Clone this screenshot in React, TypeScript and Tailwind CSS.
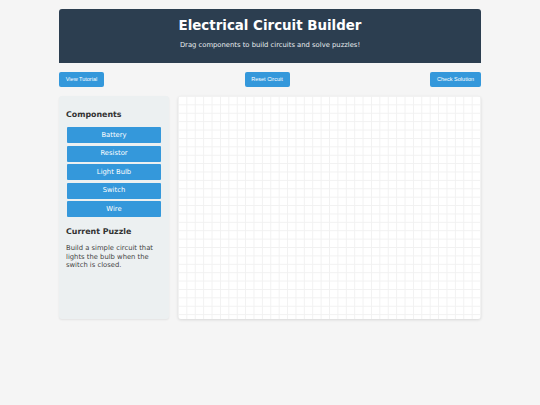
export default function App() {
  const comps = ["Battery", "Resistor", "Light Bulb", "Switch", "Wire"];
  return (
    <div className="min-h-[405px] w-[540px] bg-[#f5f5f5] pt-[9px]" style={{ fontFamily: '"DejaVu Sans", sans-serif' }}>
      <div className="mx-auto w-[422px]">
        <div className="flex h-[54px] flex-col items-center rounded-t-[3px] bg-[#2c3e50] pt-[8px] text-white">
          <div className="text-[13.4px] font-bold leading-[18px]">Electrical Circuit Builder</div>
          <div className="mt-[6px] text-[6.8px] leading-[9px] text-[#e8ecef]">Drag components to build circuits and solve puzzles!</div>
        </div>
        <div className="mt-[9px] flex justify-between" style={{ fontFamily: '"Liberation Sans", Arial, sans-serif' }}>
          <button className="h-[15px] w-[45px] rounded-[2px] bg-[#3498db] text-[5.5px] text-white">View Tutorial</button>
          <button className="h-[15px] w-[45px] rounded-[2px] bg-[#3498db] text-[5.5px] text-white">Reset Circuit</button>
          <button className="h-[15px] w-[51px] rounded-[2px] bg-[#3498db] text-[5.5px] text-white">Check Solution</button>
        </div>
        <div className="mt-[9px] flex gap-[9px]">
          <div className="h-[223px] w-[110px] rounded-[3px] bg-[#ecf0f1] px-[7px] pt-[13px] shadow-[0_1px_2px_rgba(0,0,0,0.08)]">
            <div className="text-[7.9px] font-bold leading-[11px] text-[#333]">Components</div>
            <div className="mt-[7px] flex flex-col gap-[2.5px] px-[1px]">
              {comps.map((c) => (
                <div key={c} className="flex h-[16px] items-center justify-center rounded-[1px] bg-[#3498db] text-[6.8px] text-white">
                  {c}
                </div>
              ))}
            </div>
            <div className="mt-[9px] text-[7.9px] font-bold leading-[11px] text-[#333]">Current Puzzle</div>
            <div className="mt-[7px] text-[6.8px] leading-[8.5px] text-[#444]">
              Build a simple circuit that lights the bulb when the switch is closed.
            </div>
          </div>
          <div className="h-[223px] flex-1 rounded-[3px] bg-white bg-[image:linear-gradient(to_right,#f1f1f1_1px,transparent_1px),linear-gradient(to_bottom,#f1f1f1_1px,transparent_1px)] bg-[size:8.4px_8.4px] shadow-[0_1px_3px_rgba(0,0,0,0.12)]"></div>
        </div>
      </div>
    </div>
  );
}
